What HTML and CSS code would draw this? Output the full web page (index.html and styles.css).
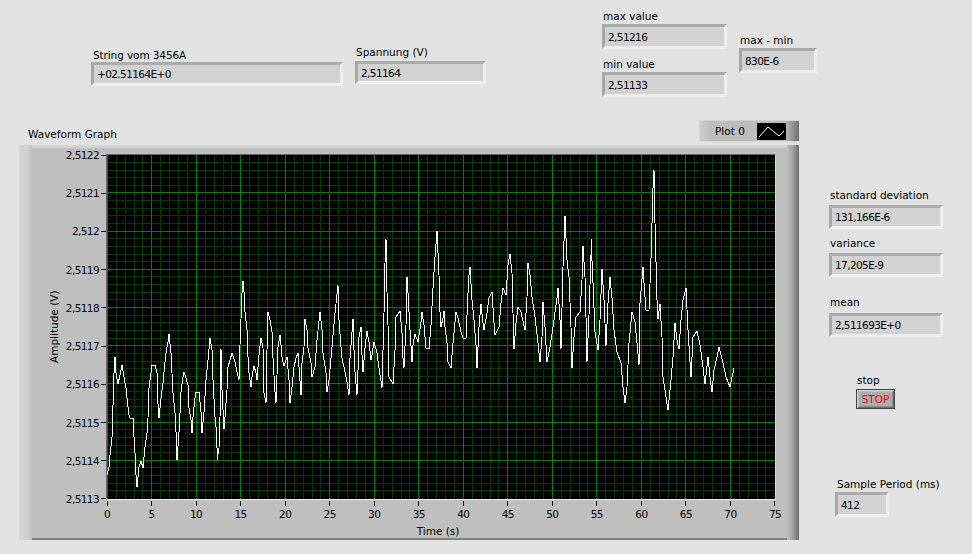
FILE: index.html
```html
<!DOCTYPE html>
<html lang="de">
<head>
<meta charset="utf-8">
<title>Waveform Graph</title>
<link rel="stylesheet" href="styles.css">
</head>
<body>
<main class="front">
  <div class="left">
    <div class="top">
      <div class="ctl ctl-string">
        <div class="lbl">String vom 3456A</div>
        <div class="box box-string">+02.51164E+0</div>
      </div>
      <div class="ctl ctl-volt">
        <div class="lbl">Spannung (V)</div>
        <div class="box box-volt">2,51164</div>
      </div>
      <div class="minmax">
        <div class="ctl">
          <div class="lbl">max value</div>
          <div class="box box-mm">2,51216</div>
        </div>
        <div class="ctl ctl-min">
          <div class="lbl">min value</div>
          <div class="box box-mm">2,51133</div>
        </div>
      </div>
      <div class="ctl ctl-diff">
        <div class="lbl">max - min</div>
        <div class="box box-diff">830E-6</div>
      </div>
    </div>
    <div class="graph-head">
      <div class="graph-title">Waveform Graph</div>
      <div class="legend">
        <span class="legend-name">Plot 0</span>
        <svg class="swatch" width="29" height="17" viewBox="0 0 29 17"><polyline points="2,14 11,4 22,13 27,8" fill="none" stroke="#fff" stroke-width="1"/></svg>
      </div>
    </div>
    <div class="graph">
      <div class="yside">
        <div class="ytitle">Amplitude (V)</div>
        <div class="yticks">
          <div class="ytick"><span>2,5122</span><i></i></div>
          <div class="ytick"><span>2,5121</span><i></i></div>
          <div class="ytick"><span>2,512</span><i></i></div>
          <div class="ytick"><span>2,5119</span><i></i></div>
          <div class="ytick"><span>2,5118</span><i></i></div>
          <div class="ytick"><span>2,5117</span><i></i></div>
          <div class="ytick"><span>2,5116</span><i></i></div>
          <div class="ytick"><span>2,5115</span><i></i></div>
          <div class="ytick"><span>2,5114</span><i></i></div>
          <div class="ytick"><span>2,5113</span><i></i></div>
        </div>
      </div>
      <div class="plot">
        <svg class="plot-svg" width="668" height="344" viewBox="107 155 668 344">
          <rect x="107" y="155" width="668" height="344" fill="#000"/>
          <path class="grid-minor" d="M116.5 155V499M125.5 155V499M134.5 155V499M142.5 155V499M160.5 155V499M169.5 155V499M178.5 155V499M187.5 155V499M205.5 155V499M214.5 155V499M223.5 155V499M231.5 155V499M249.5 155V499M258.5 155V499M267.5 155V499M276.5 155V499M294.5 155V499M303.5 155V499M312.5 155V499M320.5 155V499M338.5 155V499M347.5 155V499M356.5 155V499M365.5 155V499M383.5 155V499M392.5 155V499M401.5 155V499M409.5 155V499M427.5 155V499M436.5 155V499M445.5 155V499M454.5 155V499M472.5 155V499M481.5 155V499M490.5 155V499M498.5 155V499M516.5 155V499M525.5 155V499M534.5 155V499M543.5 155V499M561.5 155V499M570.5 155V499M579.5 155V499M587.5 155V499M605.5 155V499M614.5 155V499M623.5 155V499M632.5 155V499M650.5 155V499M659.5 155V499M668.5 155V499M676.5 155V499M694.5 155V499M703.5 155V499M712.5 155V499M721.5 155V499M739.5 155V499M748.5 155V499M757.5 155V499M765.5 155V499M107 162.5H775M107 170.5H775M107 177.5H775M107 185.5H775M107 200.5H775M107 208.5H775M107 215.5H775M107 223.5H775M107 238.5H775M107 246.5H775M107 254.5H775M107 261.5H775M107 276.5H775M107 284.5H775M107 292.5H775M107 299.5H775M107 315.5H775M107 322.5H775M107 330.5H775M107 338.5H775M107 353.5H775M107 361.5H775M107 368.5H775M107 376.5H775M107 391.5H775M107 399.5H775M107 406.5H775M107 414.5H775M107 429.5H775M107 437.5H775M107 445.5H775M107 452.5H775M107 467.5H775M107 475.5H775M107 483.5H775M107 490.5H775"/>
          <path class="grid-major" d="M107.5 155V499M151.5 155V499M196.5 155V499M240.5 155V499M285.5 155V499M329.5 155V499M374.5 155V499M418.5 155V499M463.5 155V499M507.5 155V499M552.5 155V499M596.5 155V499M641.5 155V499M685.5 155V499M730.5 155V499M107 192.5H775M107 231.5H775M107 269.5H775M107 307.5H775M107 345.5H775M107 383.5H775M107 422.5H775M107 460.5H775"/>
          <polyline class="trace" points="107,475 109,467 110,455 112,437 113,405 114,373 115,357 116,373 118,384 120,375 122,365 124,377 126,388 127,398 129,415 130,418 133,418 134,437 135,453 136,475 137,487 138,477 139,467 141,461 143,468 145,447 147,433 148,418 149,388 151,373 152,365 155,365 157,373 157,390 159,418 161,398 163,383 164,372 166,353 168,342 169,334 171,353 173,393 175,413 176,432 177,460 179,432 180,413 181,392 183,377 184,372 186,378 188,385 189,408 191,420 192,433 193,417 195,398 196,392 199,392 201,412 202,433 204,412 206,380 208,360 210,338 212,350 213,380 215,417 216,427 217,448 217,460 219,448 220,418 221,349 222,390 224,429 225,417 227,390 228,367 230,360 232,353 235,362 237,372 239,380 240,345 242,293 243,281 244,292 245,312 247,330 248,357 249,373 251,387 252,377 254,366 256,373 257,380 259,355 261,338 263,348 264,393 266,403 267,350 268,312 270,320 272,332 273,358 275,392 276,403 278,347 280,335 281,345 282,357 284,366 287,357 289,380 290,403 292,387 294,367 296,358 298,353 301,395 302,363 304,347 305,319 307,330 308,348 311,363 312,377 315,367 317,340 320,312 322,330 323,353 326,373 327,392 329,380 332,347 335,313 338,285 339,320 341,347 342,358 345,372 347,382 349,395 350,358 352,332 353,319 354,350 355,372 357,395 358,370 359,337 361,327 362,355 363,372 365,348 367,331 369,342 371,360 372,355 374,342 377,353 379,368 382,388 384,313 385,263 386,239 387,292 388,325 389,377 393,384 395,350 396,317 400,311 402,333 403,358 404,368 406,325 407,277 408,293 410,330 412,362 413,345 415,334 418,342 421,322 422,312 424,325 426,348 429,349 431,325 433,288 435,257 437,231 439,275 440,312 441,327 443,318 444,311 445,327 447,343 448,362 451,368 453,343 456,312 458,318 461,332 463,338 466,338 468,293 469,275 470,267 472,300 474,320 476,345 477,368 479,327 481,304 483,323 484,330 487,313 489,298 492,292 494,323 495,335 499,327 501,303 503,288 506,295 508,265 510,254 512,273 513,313 514,349 516,323 518,307 521,312 525,330 527,297 528,263 530,275 532,297 535,317 538,343 540,362 542,337 543,302 545,327 547,362 550,347 553,327 557,298 558,288 560,320 561,349 563,267 565,216 567,260 569,277 571,327 572,368 574,337 576,317 580,312 582,280 583,246 585,277 586,317 587,362 589,315 591,255 591,239 593,283 595,332 598,350 600,320 602,269 604,300 606,346 608,303 610,277 612,298 614,330 617,352 621,363 623,387 625,403 627,387 629,343 632,312 635,322 637,343 639,365 640,303 643,267 644,283 646,310 649,310 651,258 653,188 654,170 655,223 657,300 658,319 660,304 662,337 663,377 666,397 668,410 671,380 673,357 675,323 677,340 679,349 681,320 683,300 686,288 688,330 691,377 693,337 697,331 700,345 703,367 705,384 708,357 710,377 712,392 714,370 717,357 719,347 723,363 726,377 730,387 734,368"/>
        </svg>
      </div>
      <div class="xside">
        <div class="xticks">
          <div class="xtick"><i></i><span>0</span></div>
          <div class="xtick"><i></i><span>5</span></div>
          <div class="xtick"><i></i><span>10</span></div>
          <div class="xtick"><i></i><span>15</span></div>
          <div class="xtick"><i></i><span>20</span></div>
          <div class="xtick"><i></i><span>25</span></div>
          <div class="xtick"><i></i><span>30</span></div>
          <div class="xtick"><i></i><span>35</span></div>
          <div class="xtick"><i></i><span>40</span></div>
          <div class="xtick"><i></i><span>45</span></div>
          <div class="xtick"><i></i><span>50</span></div>
          <div class="xtick"><i></i><span>55</span></div>
          <div class="xtick"><i></i><span>60</span></div>
          <div class="xtick"><i></i><span>65</span></div>
          <div class="xtick"><i></i><span>70</span></div>
          <div class="xtick"><i></i><span>75</span></div>
        </div>
        <div class="xtitle">Time (s)</div>
      </div>
    </div>
  </div>
  <div class="right">
    <div class="ctl ctl-std">
      <div class="lbl">standard deviation</div>
      <div class="box box-stat">131,166E-6</div>
    </div>
    <div class="ctl ctl-var">
      <div class="lbl">variance</div>
      <div class="box box-stat">17,205E-9</div>
    </div>
    <div class="ctl ctl-mean">
      <div class="lbl">mean</div>
      <div class="box box-stat">2,511693E+0</div>
    </div>
    <div class="ctl ctl-stop">
      <div class="lbl">stop</div>
      <div class="stop-btn">STOP</div>
    </div>
    <div class="ctl ctl-sample">
      <div class="lbl">Sample Period (ms)</div>
      <div class="box box-sample">412</div>
    </div>
  </div>
</main>
</body>
</html>
```

FILE: styles.css
```css
* { box-sizing: border-box; }
html, body { margin: 0; padding: 0; }
body {
  width: 972px;
  height: 554px;
  overflow: hidden;
  background: #e2e2e2;
  color: #000;
  font-family: "DejaVu Sans", sans-serif;
  font-size: 10.5px;
}
.front { display: flex; height: 554px; }
.left { width: 820px; padding-left: 19px; }
.right { width: 152px; display: flex; flex-direction: column; }

.ctl { display: flex; flex-direction: column; }
.lbl { height: 15px; line-height: 14px; padding-left: 1px; white-space: nowrap; }
.box {
  display: flex;
  align-items: center;
  padding-left: 3px;
  background: #d2d2d2;
  border-style: solid;
  border-width: 3px;
  border-color: #ababab #eeeeee #eeeeee #a6a6a6;
  white-space: nowrap;
  letter-spacing: -0.6px;
}

.top { display: flex; height: 118px; padding-left: 72px; }
.ctl-string { margin-top: 48px; }
.ctl-string .lbl { height: 14px; padding-left: 2px; letter-spacing: -0.1px; }
.box-string { width: 252px; height: 24px; }
.ctl-volt { margin-top: 45px; margin-left: 12px; }
.ctl-volt .lbl { height: 16px; }
.box-volt { width: 131px; height: 23px; }
.minmax { margin-left: 116px; margin-top: 9px; }
.box-mm { width: 125px; height: 25px; }
.ctl-min { margin-top: 8px; }
.ctl-diff { margin-top: 33px; margin-left: 12px; }
.box-diff { width: 78px; height: 25px; }

.graph-head { display: flex; justify-content: space-between; width: 780px; height: 27px; }
.graph-title { margin-left: 9px; margin-top: 9px; line-height: 14px; }
.legend {
  display: flex;
  align-items: center;
  width: 100px;
  height: 22px;
  margin-top: 2px;
  padding-left: 16px;
  border-top: 1px solid #d4d4d4;
  border-bottom: 1px solid #dadada;
  background: linear-gradient(to right, #cfcfcf 0, #bdbdbd 12px, #bdbdbd 86px, #707070 100px);
}
.legend-name { width: 42px; }
.swatch { background: #000; }

.graph {
  display: grid;
  grid-template-columns: 87px 670px;
  grid-template-rows: 346px auto;
  width: 780px;
  height: 395px;
  padding-top: 9px;
  background-color: #bfbfbf;
  background-image:
    linear-gradient(to right, #d6d6d6 0, #cdcdcd 9px, #bfbfbf 13px),
    linear-gradient(to right, #bfbfbf 0, #a0a0a0 6px, #6c6c6c 12px),
    linear-gradient(#d6d6d6, #d0d0d0),
    linear-gradient(#808080, #808080);
  background-size: 13px 100%, 12px 100%, 100% 3px, 100% 2px;
  background-position: left top, right top, left top, left bottom;
  background-repeat: no-repeat;
}
.yside { display: flex; }
.ytitle {
  width: 14px;
  margin-left: 28px;
  writing-mode: vertical-rl;
  transform: rotate(180deg);
  text-align: center;
  line-height: 14px;
}
.yticks {
  flex: 1;
  display: flex;
  flex-direction: column;
  justify-content: space-between;
  padding: 1px 0;
}
.ytick {
  height: 0;
  display: flex;
  align-items: center;
  justify-content: flex-end;
  letter-spacing: -0.6px;
}
.ytick i { width: 5px; height: 1px; margin-left: 2px; background: #111; }

.plot {
  width: 670px;
  height: 346px;
  border-style: solid;
  border-width: 1px;
  border-color: #666 #d8d8d8 #e8e8e8 #666;
}
.plot-svg { display: block; }
.grid-minor { fill: none; stroke: #003a00; stroke-width: 1; shape-rendering: crispEdges; }
.grid-major { fill: none; stroke: #007f00; stroke-width: 1; shape-rendering: crispEdges; }
.trace { fill: none; stroke: #fff; stroke-width: 1; shape-rendering: crispEdges; }

.xside { grid-column: 2; padding-left: 1px; }
.xticks { display: flex; justify-content: space-between; width: 668px; height: 24px; letter-spacing: -0.6px; }
.xtick {
  width: 0;
  display: flex;
  flex-direction: column;
  align-items: center;
}
.xtick i { flex: none; width: 1px; height: 5px; margin-top: 1px; background: #111; }
.xtick span { margin-top: 1px; line-height: 14px; }
.xtitle { width: 662px; text-align: center; line-height: 14px; }

.ctl-std { margin-top: 188px; margin-left: 9px; }
.ctl-std .lbl { height: 17px; }
.ctl-var { margin-top: 7px; margin-left: 9px; }
.ctl-var .lbl { height: 17px; }
.ctl-mean { margin-top: 18px; margin-left: 9px; }
.ctl-mean .lbl { height: 18px; }
.box-stat { width: 114px; height: 24px; }
.ctl-stop { margin-top: 36px; margin-left: 36px; }
.ctl-stop .lbl { height: 16px; }
.ctl-sample { margin-top: 68px; margin-left: 15px; }
.ctl-sample .lbl { padding-left: 2px; }
.box-sample { width: 54px; height: 25px; }
.stop-btn {
  width: 39px;
  height: 20px;
  display: flex;
  align-items: center;
  justify-content: center;
  color: #f00;
  background: #adadad;
  border: 1px solid #444;
  box-shadow: inset 1px 1px 0 #d0d0d0, inset -1px -1px 0 #707070, inset 2px 2px 0 #bcbcbc, inset -2px -2px 0 #8c8c8c;
}
```
